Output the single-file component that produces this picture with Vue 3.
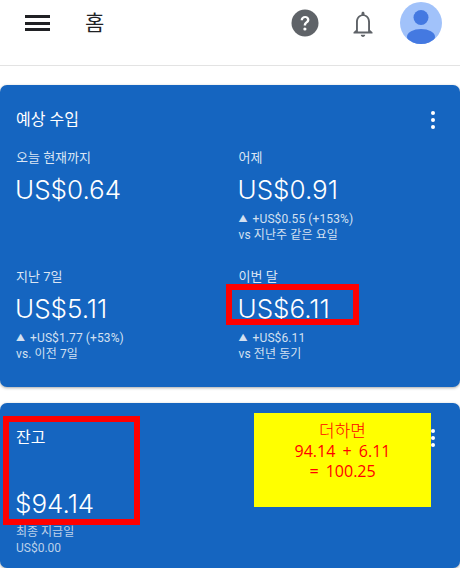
<script setup>
const stats = [
  { label: '오늘 현재까지', value: 'US$0.64' },
  { label: '어제', value: 'US$0.91', delta: '+US$0.55 (+153%)', note: 'vs 지난주 같은 요일' },
  { label: '지난 7일', value: 'US$5.11', delta: '+US$1.77 (+53%)', note: 'vs. 이전 7일' },
  { label: '이번 달', value: 'US$6.11', delta: '+US$6.11', note: 'vs 전년 동기', marked: true },
]
</script>

<template>
  <div class="page">
    <header class="topbar">
      <button class="menu-btn" aria-label="메뉴">
        <span></span><span></span><span></span>
      </button>
      <h1 class="page-title">홈</h1>
      <div class="topbar-actions">
        <svg class="help-icon" viewBox="0 0 28 28" width="28" height="28">
          <circle cx="14" cy="14" r="13.5" fill="#5f6368" />
          <path d="M9.6 11.2c0-2.6 2-4.3 4.5-4.3 2.4 0 4.3 1.500 4.300 3.800 0 1.600-.9 2.500-1.900 3.300-.9.700-1.400 1.200-1.400 2.500h-2.400c0-2 .8-2.900 1.900-3.800.8-.6 1.400-1.100 1.400-2 0-1-.9-1.700-1.900-1.700-1.200 0-2 .9-2.100 2.200z" fill="#fff" />
          <circle cx="13.9" cy="20" r="1.6" fill="#fff" />
        </svg>
        <svg class="bell-icon" viewBox="0 0 24 28" width="24" height="28">
          <path d="M12 .8c-.9 0-1.500.7-1.500 1.600v1C7 4.200 5 7.200 5 11v8l-2.500 2.200v1.300h19v-1.300L19 19v-8c0-3.800-2-6.800-5.500-7.600v-1c0-.9-.6-1.600-1.500-1.600zM6.900 20.500V11c0-3.400 2-5.900 5.100-5.900s5.100 2.500 5.100 5.900v9.500z" fill="#5f6368" />
          <path d="M9.800 23.800h4.400c0 1.300-1 2.200-2.200 2.200s-2.200-.9-2.200-2.200z" fill="#5f6368" />
        </svg>
        <svg class="avatar" viewBox="0 0 42 42" width="42" height="42">
          <defs>
            <clipPath id="avatar-clip"><circle cx="21" cy="21" r="21" /></clipPath>
          </defs>
          <circle cx="21" cy="21" r="21" fill="#a1c2fa" />
          <g clip-path="url(#avatar-clip)" fill="#4479e1">
            <circle cx="21" cy="15.500" r="7.500" />
            <ellipse cx="21" cy="35" rx="14" ry="8" />
          </g>
        </svg>
      </div>
    </header>

    <main class="content">
      <section class="card earnings">
        <div class="card-head">
          <h2 class="card-title">예상 수입</h2>
          <span class="dots"><i></i><i></i><i></i></span>
        </div>
        <div class="stat-grid">
          <div v-for="s in stats" :key="s.label" class="stat">
            <div class="stat-label">{{ s.label }}</div>
            <div class="stat-value">{{ s.value }}</div>
            <div v-if="s.delta" class="stat-delta"><span class="arrow">▲</span>{{ s.delta }}</div>
            <div v-if="s.note" class="stat-delta">{{ s.note }}</div>
            <div v-if="s.marked" class="mark mark-month"></div>
          </div>
        </div>
      </section>

      <section class="card balance">
        <div class="card-head">
          <h2 class="card-title">잔고</h2>
          <span class="dots"><i></i><i></i><i></i></span>
        </div>
        <div class="balance-value">$94.14</div>
        <div class="balance-note">최종 지급일</div>
        <div class="balance-note">US$0.00</div>
        <div class="mark mark-balance"></div>
        <div class="sum-note">
          <div class="sum-head">더하면</div>
          <div>94.14 + 6.11</div>
          <div>= 100.25</div>
        </div>
      </section>
    </main>
  </div>
</template>

<style>
html,
body {
  margin: 0;
  background: #fff;
}
</style>

<style scoped>
.page {
  width: 460px;
  height: 568px;
  overflow: hidden;
  background: #fff;
  font-family: Roboto, "Noto Sans CJK KR", sans-serif;
}

.topbar {
  height: 66px;
  box-sizing: border-box;
  border-bottom: 1px solid #e3e3e3;
  display: flex;
  align-items: flex-start;
  padding: 2px 18px 0 25px;
}

.menu-btn {
  width: 25px;
  height: 16px;
  margin-top: 13px;
  padding: 0;
  border: none;
  background: none;
  display: flex;
  flex-direction: column;
  justify-content: space-between;
}

.menu-btn span {
  display: block;
  height: 3px;
  background: #202124;
}

.page-title {
  margin: 7px 0 0 35px;
  font-size: 21px;
  font-weight: 400;
  line-height: 28px;
  color: #202124;
}

.topbar-actions {
  margin-left: auto;
  display: flex;
  align-items: flex-start;
}

.help-icon {
  margin-top: 7px;
}

.bell-icon {
  margin: 9px 0 0 32px;
}

.avatar {
  margin-left: 25px;
}

.content {
  padding-top: 19px;
  display: flex;
  flex-direction: column;
  gap: 16px;
}

.card {
  position: relative;
  background: #1565c0;
  color: #fff;
  border-radius: 7px;
  box-shadow: 0 1px 3px rgba(60, 64, 67, 0.45);
  padding: 0 16px;
  box-sizing: border-box;
}

.earnings {
  height: 302px;
  padding-top: 23px;
}

.card-head {
  display: flex;
  align-items: center;
  justify-content: space-between;
  padding-right: 9px;
}

.card-title {
  margin: 0;
  font-size: 16px;
  font-weight: 400;
  line-height: 24px;
}

.dots {
  display: flex;
  flex-direction: column;
  gap: 3px;
}

.dots i {
  display: block;
  width: 4px;
  height: 4px;
  border-radius: 50%;
  background: #fff;
}

.stat-grid {
  margin-top: 16px;
  display: grid;
  grid-template-columns: 222.5px 1fr;
  grid-auto-rows: 119px;
}

.stat {
  position: relative;
}

.stat-label {
  font-size: 13px;
  line-height: 20px;
  color: #dbe6f4;
}

.stat-value {
  margin: 4px 0 0 -1px;
  font-family: Inter, Roboto, sans-serif;
  font-size: 26px;
  font-weight: 300;
  line-height: 36px;
}

.stat-delta {
  font-size: 12px;
  letter-spacing: 0.1px;
  line-height: 16px;
  color: #d3e0f1;
}

.stat-value + .stat-delta {
  margin-top: 3px;
}

.arrow {
  font-size: 9px;
  margin-right: 5px;
  vertical-align: 1px;
}

.mark {
  position: absolute;
  box-sizing: border-box;
  border: 6px solid #ff0000;
}

.mark-month {
  left: -12.500px;
  top: 17px;
  width: 133px;
  height: 41px;
}

.balance {
  height: 165px;
  padding-top: 23px;
}

.balance-value {
  margin: 36px 0 0 -1px;
  font-family: Inter, Roboto, sans-serif;
  font-size: 26px;
  font-weight: 300;
  line-height: 36px;
}

.balance-note {
  font-size: 12px;
  line-height: 16px;
  color: #bcd1ea;
}

.balance-value + .balance-note {
  margin-top: 2px;
}

.mark-balance {
  left: 3px;
  top: 13px;
  width: 137px;
  height: 109px;
}

.sum-note {
  position: absolute;
  left: 254px;
  top: 10px;
  width: 177px;
  height: 94px;
  box-sizing: border-box;
  padding-top: 8px;
  background: #ffff00;
  color: #ff0000;
  text-align: center;
  font-family: "Open Sans", "Noto Sans CJK KR", sans-serif;
  font-size: 16px;
  line-height: 20px;
  word-spacing: 3px;
}

.sum-head {
  font-size: 17px;
  font-weight: 300;
}
</style>
